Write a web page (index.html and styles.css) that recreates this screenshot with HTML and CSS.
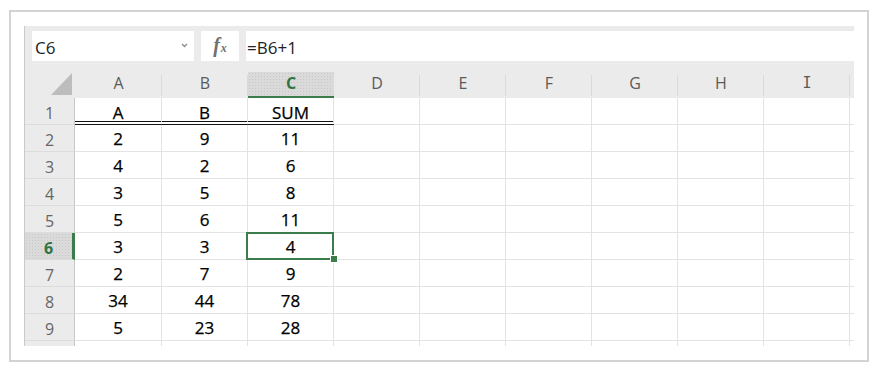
FILE: index.html
```html
<!DOCTYPE html>
<html>
<head>
<meta charset="utf-8">
<link rel="stylesheet" href="styles.css">
</head>
<body>
<div class="frame">
  <div class="sheet">
    <div class="toolbar">
      <div class="namebox">
        <span>C6</span>
        <svg class="chev" width="7" height="5" viewBox="0 0 7 5"><path d="M1 1 L3.5 3.5 L6 1" fill="none" stroke="#8a8a8a" stroke-width="1.3"/></svg>
      </div>
      <div class="fxbox"><span class="fx">f<span class="sx">x</span></span></div>
      <div class="formula">=B6+1</div>
    </div>
    <div class="grid">
      <div class="corner"><svg width="50" height="26" viewBox="0 0 50 26"><polygon points="26,23 47,23 47,1" fill="#bdbdbd"/></svg></div>
      <div class="ch">A</div><div class="ch">B</div><div class="ch sel">C</div><div class="ch">D</div><div class="ch">E</div><div class="ch">F</div><div class="ch">G</div><div class="ch">H</div><div class="ch"><span class="serifI">I</span></div><div class="ch end"></div>

      <div class="rh r1">1</div><div class="c dbl first">A</div><div class="c dbl">B</div><div class="c dbl">SUM</div><div class="c"></div><div class="c"></div><div class="c"></div><div class="c"></div><div class="c"></div><div class="c"></div><div class="c end"></div>

      <div class="rh">2</div><div class="c">2</div><div class="c">9</div><div class="c">11</div><div class="c"></div><div class="c"></div><div class="c"></div><div class="c"></div><div class="c"></div><div class="c"></div><div class="c end"></div>

      <div class="rh">3</div><div class="c">4</div><div class="c">2</div><div class="c">6</div><div class="c"></div><div class="c"></div><div class="c"></div><div class="c"></div><div class="c"></div><div class="c"></div><div class="c end"></div>

      <div class="rh">4</div><div class="c">3</div><div class="c">5</div><div class="c">8</div><div class="c"></div><div class="c"></div><div class="c"></div><div class="c"></div><div class="c"></div><div class="c"></div><div class="c end"></div>

      <div class="rh">5</div><div class="c">5</div><div class="c">6</div><div class="c">11</div><div class="c"></div><div class="c"></div><div class="c"></div><div class="c"></div><div class="c"></div><div class="c"></div><div class="c end"></div>

      <div class="rh rsel">6</div><div class="c">3</div><div class="c">3</div><div class="c active">4<span class="handle"></span></div><div class="c"></div><div class="c"></div><div class="c"></div><div class="c"></div><div class="c"></div><div class="c"></div><div class="c end"></div>

      <div class="rh">7</div><div class="c">2</div><div class="c">7</div><div class="c">9</div><div class="c"></div><div class="c"></div><div class="c"></div><div class="c"></div><div class="c"></div><div class="c"></div><div class="c end"></div>

      <div class="rh">8</div><div class="c">34</div><div class="c">44</div><div class="c">78</div><div class="c"></div><div class="c"></div><div class="c"></div><div class="c"></div><div class="c"></div><div class="c"></div><div class="c end"></div>

      <div class="rh">9</div><div class="c">5</div><div class="c">23</div><div class="c">28</div><div class="c"></div><div class="c"></div><div class="c"></div><div class="c"></div><div class="c"></div><div class="c"></div><div class="c end"></div>

      <div class="rh tail"></div><div class="c tail"></div><div class="c tail"></div><div class="c tail"></div><div class="c tail"></div><div class="c tail"></div><div class="c tail"></div><div class="c tail"></div><div class="c tail"></div><div class="c tail"></div><div class="c tail end"></div>
    </div>
  </div>
</div>
</body>
</html>
```

FILE: styles.css
```css
html, body {
  margin: 0;
  padding: 0;
  background: #ffffff;
}

.frame {
  box-sizing: border-box;
  width: 860px;
  height: 352px;
  margin: 10px 0 0 9px;
  border: 2px solid #d3d3d3;
  padding: 14px 13px;
  background: #ffffff;
}

.sheet {
  height: 320px;
  border-left: 1px solid #c9c9c9;
  display: flex;
  flex-direction: column;
}

.toolbar {
  background: #ebebeb;
  height: 46px;
  box-sizing: border-box;
  padding: 5px 0 11px 7px;
  display: flex;
  gap: 7px;
  font-family: "Open Sans", "Liberation Sans", sans-serif;
  font-size: 17px;
  color: #222222;
}

.namebox {
  width: 162px;
  background: #ffffff;
  display: flex;
  align-items: center;
  justify-content: space-between;
  padding: 2px 6px 0 3px;
  box-sizing: border-box;
}

.chev {
  margin-top: -3px;
}

.fxbox {
  width: 38px;
  background: #ffffff;
  display: flex;
  align-items: center;
  justify-content: center;
}

.fx {
  font-family: "Liberation Serif", serif;
  font-style: italic;
  font-weight: 700;
  font-size: 20px;
  color: #707070;
  margin-top: -1px;
}

.sx {
  font-size: 12px;
  margin-left: 1px;
}

.formula {
  flex: 1;
  background: #ffffff;
  display: flex;
  align-items: center;
  padding: 2px 0 0 1px;
}

.grid {
  flex: 1;
  display: grid;
  grid-template-columns: 50px 87px repeat(8, 86px) 1fr;
  grid-template-rows: 26px repeat(9, 27px) 1fr;
  font-family: "Open Sans", "Liberation Sans", sans-serif;
}

.corner {
  background: #ebebeb;
}

.corner svg {
  display: block;
}

.ch {
  background: #ebebeb;
  color: #5a5a5a;
  font-size: 16px;
  display: flex;
  align-items: center;
  justify-content: center;
  padding-bottom: 4px;
  box-sizing: border-box;
  position: relative;
}

.ch::after {
  content: "";
  position: absolute;
  right: 0;
  top: 3px;
  bottom: 2px;
  width: 1px;
  background: #dadada;
}

.ch.end::after {
  display: none;
}

.ch.sel {
  background-color: #dadada;
  background-image: radial-gradient(#c9c9c9 0.6px, transparent 0.8px);
  background-size: 3px 3px;
  color: #2f7442;
  font-weight: 700;
  border-bottom: 2px solid #3a7d4b;
  padding-bottom: 2px;
}

.serifI {
  font-family: "DejaVu Sans Mono", monospace;
  font-size: 15px;
}

.rh {
  background: #ebebeb;
  color: #666666;
  font-size: 16px;
  border-right: 1px solid #c8c8c8;
  border-bottom: 1px solid #dcdcdc;
  display: flex;
  align-items: center;
  justify-content: center;
  padding-top: 3px;
  box-sizing: border-box;
}

.rh.rsel {
  background-color: #dadada;
  background-image: radial-gradient(#c9c9c9 0.6px, transparent 0.8px);
  background-size: 3px 3px;
  color: #2f7442;
  font-weight: 700;
  border-right: 3px solid #3a7d4b;
}

.rh.tail {
  border-bottom: none;
}

.c {
  border-right: 1px solid #e3e3e3;
  border-bottom: 1px solid #e3e3e3;
  box-sizing: border-box;
  display: flex;
  align-items: center;
  justify-content: center;
  font-size: 17px;
  color: #000000;
  padding-top: 1px;
  -webkit-text-stroke: 0.25px #000000;
}

.c.end {
  border-right: none;
}

.c.tail {
  border-bottom: none;
}

.c.dbl {
  border-bottom: 4px double #111111;
  padding-top: 6px;
}

.c.active {
  position: relative;
}

.c.active::before {
  content: "";
  position: absolute;
  left: -2px;
  top: -1px;
  right: -1px;
  bottom: -1px;
  border: 2px solid #3a7d4b;
}

.handle {
  position: absolute;
  right: -4px;
  bottom: -3px;
  width: 6px;
  height: 6px;
  background: #3a7d4b;
  box-shadow: 0 0 0 1px #ffffff;
}
```
